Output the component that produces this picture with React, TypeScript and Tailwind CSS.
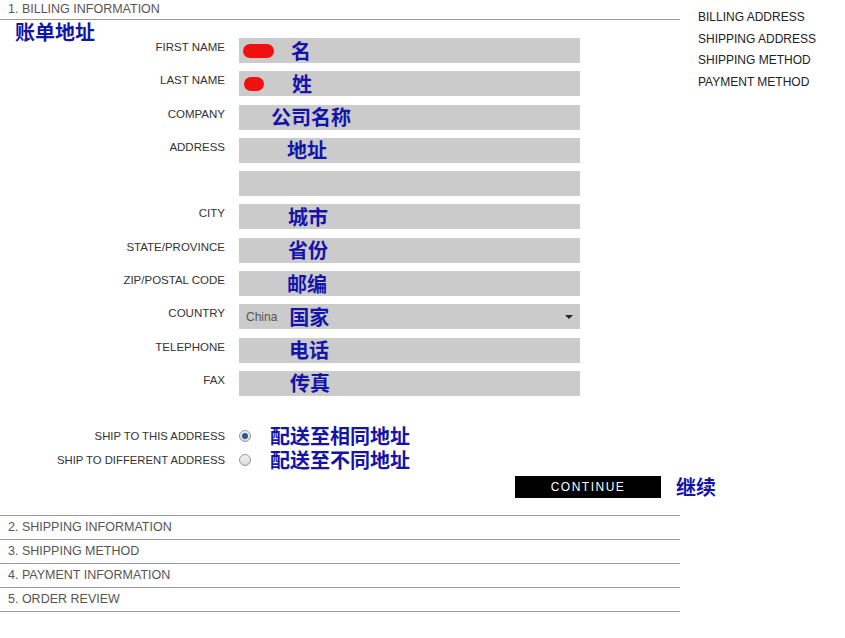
import React from 'react';

// 表单行
const rows = [
  { label: 'FIRST NAME', note: '名', pad: 'pl-[52px]', blob: 'w-[31px]' },
  { label: 'LAST NAME', note: '姓', pad: 'pl-[53px]', blob: 'w-[20px]' },
  { label: 'COMPANY', note: '公司名称', pad: 'pl-[32px]' },
  { label: 'ADDRESS', note: '地址', pad: 'pl-[48px]' },
  { label: '', note: '', pad: '' },
  { label: 'CITY', note: '城市', pad: 'pl-[49px]' },
  { label: 'STATE/PROVINCE', note: '省份', pad: 'pl-[49px]' },
  { label: 'ZIP/POSTAL CODE', note: '邮编', pad: 'pl-[48px]' },
  { label: 'COUNTRY', note: '国家', pad: '', select: true },
  { label: 'TELEPHONE', note: '电话', pad: 'pl-[50px]' },
  { label: 'FAX', note: '传真', pad: 'pl-[51px]' },
];

const steps = ['2. SHIPPING INFORMATION', '3. SHIPPING METHOD', '4. PAYMENT INFORMATION', '5. ORDER REVIEW'];
const side = ['BILLING ADDRESS', 'SHIPPING ADDRESS', 'SHIPPING METHOD', 'PAYMENT METHOD'];

const sans = "font-['Liberation_Sans',Arial,sans-serif]";
const cjk = "font-['Noto_Sans_CJK_SC',sans-serif] font-bold text-[#1414a8] whitespace-nowrap";

const App: React.FC = () => {
  return (
    <div className={`w-[845px] h-[638px] bg-white flex overflow-hidden ${sans}`}>
      <div className="w-[680px] shrink-0 relative">
        {/* 标题 */}
        <div className="h-[20px] border-b border-[#999] pl-[8px] text-[12.5px] leading-[19px] text-[#555]">
          1. BILLING INFORMATION
        </div>
        <div className={`absolute left-[15px] top-[20px] text-[20px] leading-[24px] ${cjk}`}>账单地址</div>

        {/* 账单表单 */}
        <div className="pt-[18px] flex flex-col gap-[8.3px]">
          {rows.map((r, i) => (
            <div key={i} className="flex h-[25px]">
              <div className="w-[225px] text-right text-[11.5px] leading-[13px] pt-[3px] text-[#333]">{r.label}</div>
              <div className={`ml-[14px] w-[341px] bg-[#cbcbcb] flex items-center ${r.pad}`}>
                {r.select ? (
                  <>
                    <span className="pl-[7px] text-[12px] text-[#555]">China</span>
                    <span className={`ml-[12px] text-[20px] leading-[24px] ${cjk}`}>{r.note}</span>
                    <span className="ml-auto mr-[7px] w-0 h-0 border-l-[4px] border-r-[4px] border-t-[4px] border-l-transparent border-r-transparent border-t-[#222]" />
                  </>
                ) : (
                  <>
                    {r.blob && (
                      <span className={`absolute ml-[-48px] h-[14px] ${r.blob} rounded-full bg-[#f01010]`} />
                    )}
                    <span className={`text-[20px] leading-[24px] ${cjk}`}>{r.note}</span>
                  </>
                )}
              </div>
            </div>
          ))}
        </div>

        {/* 配送选项 */}
        <div className="mt-[31px] flex flex-col gap-[6px]">
          {[
            { label: 'SHIP TO THIS ADDRESS', note: '配送至相同地址', on: true },
            { label: 'SHIP TO DIFFERENT ADDRESS', note: '配送至不同地址', on: false },
          ].map((s) => (
            <div key={s.label} className="flex items-center h-[18px]">
              <div className="w-[225px] text-right text-[11.3px] text-[#333]">{s.label}</div>
              <span className="ml-[14px] w-[12px] h-[12px] rounded-full border border-[#999] bg-gradient-to-b from-[#f4f4f4] to-[#d8d8d8] flex items-center justify-center">
                {s.on && <span className="w-[6px] h-[6px] rounded-full bg-[#2a5a90]" />}
              </span>
              <span className={`ml-[19px] text-[20px] leading-[18px] ${cjk}`}>{s.note}</span>
            </div>
          ))}
        </div>

        <div className="mt-[7px] flex items-center h-[22px]">
          <button className="ml-[515px] w-[146px] shrink-0 h-[22px] bg-black text-white text-[12px] tracking-[1.5px]">CONTINUE</button>
          <span className={`ml-[15px] text-[20px] leading-[22px] ${cjk}`}>继续</span>
        </div>

        {/* 其他步骤 */}
        <div className="mt-[17px] border-t border-[#999]">
          {steps.map((s) => (
            <div key={s} className="h-[24px] border-b border-[#999] pl-[8px] text-[12.5px] leading-[23px] text-[#555]">
              {s}
            </div>
          ))}
        </div>
      </div>

      {/* 侧边栏 */}
      <div className="pl-[18px] pt-[9px] flex flex-col">
        {side.map((s) => (
          <div key={s} className="h-[21.7px] text-[12px] leading-[16px] text-[#222] whitespace-nowrap">{s}</div>
        ))}
      </div>
    </div>
  );
};

export default App;
